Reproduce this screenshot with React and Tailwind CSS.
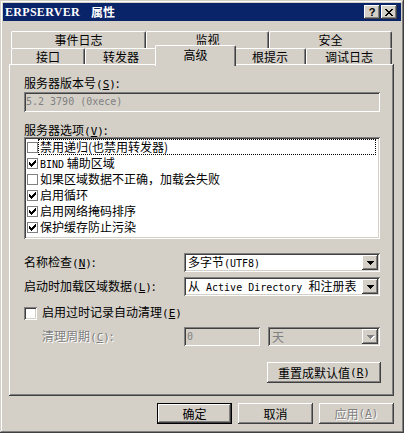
import React from "react";

const raised =
  "shadow-[inset_-1px_-1px_#404040,inset_1px_1px_#ffffff,inset_-2px_-2px_#808080,inset_2px_2px_#d4d0c8]";
const sunken =
  "shadow-[inset_1px_1px_#808080,inset_-1px_-1px_#ffffff,inset_2px_2px_#404040,inset_-2px_-2px_#d4d0c8]";

function M({ children, className = "" }) {
  return (
    <span className={"font-['DejaVu_Sans_Mono',monospace] text-[10px] " + className}>
      {children}
    </span>
  );
}

function Mn({ k }) {
  return (
    <span className="font-['DejaVu_Sans_Mono',monospace] text-[11px]">
      (<span className="underline underline-offset-1">{k}</span>)
    </span>
  );
}

function Check({ color = "#000000" }) {
  return (
    <svg width="7" height="7" viewBox="0 0 7 7" shapeRendering="crispEdges">
      <path
        fill={color}
        d="M0 2h1v3H0z M1 3h1v3H1z M2 4h1v3H2z M3 3h1v3H3z M4 2h1v3H4z M5 1h1v3H5z M6 0h1v3H6z"
      />
    </svg>
  );
}

function Tri({ color = "#000000" }) {
  return (
    <svg width="7" height="4" viewBox="0 0 7 4" shapeRendering="crispEdges">
      <path fill={color} d="M0 0h7v1H0z M1 1h5v1H1z M2 2h3v1H2z M3 3h1v1H3z" />
    </svg>
  );
}

function Combo({ children, disabled = false, className = "" }) {
  return (
    <div
      className={
        sunken +
        " h-[19px] flex items-center p-[2px] " +
        (disabled ? "bg-[#d4d0c8] " : "bg-white ") +
        className
      }
    >
      <div
        className={
          "flex-1 pl-[2px] whitespace-nowrap overflow-hidden leading-[15px] " +
          (disabled ? "text-[#808080]" : "text-black")
        }
      >
        {children}
      </div>
      <div className={raised + " w-[16px] h-[15px] bg-[#d4d0c8] flex items-center justify-center"}>
        {disabled ? (
          <span className="relative">
            <span className="absolute left-[1px] top-[1px]">
              <Tri color="#ffffff" />
            </span>
            <span className="relative block">
              <Tri color="#808080" />
            </span>
          </span>
        ) : (
          <Tri />
        )}
      </div>
    </div>
  );
}

function ListRow({ checked, focus, children }) {
  return (
    <div className="h-[16px] flex items-center">
      <div className="ml-[1px] w-[11px] h-[11px] border border-[#808080] bg-white flex items-center justify-center">
        {checked && <Check />}
      </div>
      <div
        className={
          "flex-1 h-[16px] mr-[2px] border pl-[1px] leading-[14px] whitespace-nowrap " +
          (focus ? "border-dotted border-black" : "border-transparent")
        }
      >
        {children}
      </div>
    </div>
  );
}

function Button({ children, def = false, disabled = false, className = "" }) {
  const inner = (
    <div
      className={
        raised +
        " w-full h-full bg-[#d4d0c8] flex items-center justify-center leading-[14px] " +
        (disabled ? "text-[#808080] [text-shadow:1px_1px_0_#ffffff]" : "text-black")
      }
    >
      {children}
    </div>
  );
  if (def) {
    return <div className={"border border-black " + className}>{inner}</div>;
  }
  return <div className={className}>{inner}</div>;
}

function Tab({ children, w, selected = false, h = "h-[16px]" }) {
  return (
    <div
      className={
        "relative shrink-0 flex justify-center bg-[#d4d0c8] border-t border-l border-white border-r border-r-[#404040] rounded-tl-[2px] rounded-tr-[2px] shadow-[inset_-1px_0_#808080] " +
        w +
        " " +
        (selected ? "-mx-[2px] -mt-[3px] h-[21px] z-10 pt-[2px] leading-[14px]" : h + " pt-[1px] leading-[14px]")
      }
    >
      {children}
    </div>
  );
}

export default function App() {
  return (
    <div className="w-[404px] h-[433px] bg-[#d4d0c8] p-[3px] flex flex-col text-[12px] text-black font-['Noto_Sans_CJK_SC',sans-serif] shadow-[inset_-1px_-1px_#404040,inset_1px_1px_#d4d0c8,inset_-2px_-2px_#808080,inset_2px_2px_#ffffff]">
      {/* Title bar */}
      <div className="h-[18px] bg-[#0a246a] flex items-center justify-between pl-[2px] pr-[4px] shrink-0">
        <div className="flex items-center text-white font-bold leading-[16px]">
          <span className="font-['Liberation_Serif',serif] text-[12px] font-bold tracking-[0.3px]">ERPSERVER</span>
          <span className="ml-[11px] text-[12px] font-bold">属性</span>
        </div>
        <div className="flex items-center gap-[1px]">
          <div className={raised + " w-[16px] h-[14px] bg-[#d4d0c8] flex items-center justify-center"}>
            <span className="font-['Liberation_Sans',sans-serif] font-bold text-[11px] leading-[11px] text-black">?</span>
          </div>
          <div className={raised + " w-[16px] h-[14px] bg-[#d4d0c8] flex items-center justify-center"}>
            <svg width="8" height="7" viewBox="0 0 8 7" shapeRendering="crispEdges">
              <path
                fill="#000"
                d="M0 0h2v1H0z M6 0h2v1H6z M1 1h2v1H1z M5 1h2v1H5z M2 2h4v1H2z M3 3h2v1H3z M2 4h4v1H2z M1 5h2v1H1z M5 5h2v1H5z M0 6h2v1H0z M6 6h2v1H6z"
              />
            </svg>
          </div>
        </div>
      </div>

      <div className="flex flex-col px-[6px]">
        {/* Tabs */}
        <div className="mt-[10px] flex flex-col">
          <div className="flex ml-[2px] h-[17px] items-start">
            <Tab w="w-[135px]" h="h-[17px]">事件日志</Tab>
            <Tab w="w-[123px]" h="h-[17px]">监视</Tab>
            <Tab w="w-[123px]" h="h-[17px]">安全</Tab>
          </div>
          <div className="flex ml-[2px] h-[16px] items-start">
            <Tab w="w-[74px]">接口</Tab>
            <Tab w="w-[72px]">转发器</Tab>
            <Tab w="w-[81px]" selected>
              高级
            </Tab>
            <Tab w="w-[72px]">根提示</Tab>
            <Tab w="w-[86px]">调试日志</Tab>
          </div>
        </div>

        {/* Panel */}
        <div className="w-[385px] h-[332px] bg-[#d4d0c8] shadow-[inset_-1px_-1px_#404040,inset_1px_1px_#ffffff,inset_-2px_-2px_#808080] pl-[15px] pr-[14px] flex flex-col">
          <div className="mt-[12px] h-[14px] leading-[14px]">
            服务器版本号<Mn k="S" />:
          </div>
          <div className={sunken + " mt-[2px] h-[20px] bg-[#d4d0c8] flex items-center pl-[2px]"}>
            <M className="text-[#808080] leading-[14px]">5.2 3790 (0xece)</M>
          </div>

          <div className="mt-[11px] h-[14px] leading-[14px]">
            服务器选项<Mn k="V" />:
          </div>
          <div className={sunken + " h-[102px] bg-white p-[2px] flex flex-col"}>
            <ListRow focus>禁用递归(也禁用转发器)</ListRow>
            <ListRow checked>
              <M>BIND</M> 辅助区域
            </ListRow>
            <ListRow>如果区域数据不正确，加载会失败</ListRow>
            <ListRow checked>启用循环</ListRow>
            <ListRow checked>启用网络掩码排序</ListRow>
            <ListRow checked>保护缓存防止污染</ListRow>
          </div>

          <div className="mt-[14px] h-[19px] flex items-center">
            <div className="w-[160px] leading-[14px]">
              名称检查<Mn k="N" />:
            </div>
            <Combo className="flex-1">
              多字节<M>(UTF8)</M>
            </Combo>
          </div>
          <div className="mt-[5px] h-[19px] flex items-center">
            <div className="w-[160px] leading-[14px]">
              启动时加载区域数据<Mn k="L" />:
            </div>
            <Combo className="flex-1">
              从<M> Active Directory </M>和注册表
            </Combo>
          </div>

          <div className="mt-[10px] h-[14px] flex items-center">
            <div className={sunken + " w-[13px] h-[13px] bg-white"} />
            <div className="ml-[5px] leading-[14px]">
              启用过时记录自动清理<Mn k="E" />
            </div>
          </div>

          <div className="mt-[7px] h-[19px] flex items-center">
            <div className="ml-[18px] w-[142px] leading-[14px] text-[#808080] [text-shadow:1px_1px_0_#ffffff]">
              清理周期<Mn k="C" />:
            </div>
            <div className={sunken + " w-[76px] h-[19px] bg-[#d4d0c8] flex items-center pl-[3px]"}>
              <M className="text-[#808080] leading-[14px]">0</M>
            </div>
            <Combo disabled className="ml-[8px] flex-1">
              天
            </Combo>
          </div>

          <div className="mt-[16px] flex justify-end">
            <Button className="w-[114px] h-[21px] -mr-[1px]">
              重置成默认值<Mn k="R" />
            </Button>
          </div>
        </div>

        {/* Bottom buttons */}
        <div className="w-[385px] mt-[7px] flex justify-end gap-[6px]">
          <Button def className="w-[75px] h-[21px]">
            确定
          </Button>
          <Button className="w-[75px] h-[21px]">取消</Button>
          <Button disabled className="w-[75px] h-[21px]">
            应用<Mn k="A" />
          </Button>
        </div>
      </div>
    </div>
  );
}
